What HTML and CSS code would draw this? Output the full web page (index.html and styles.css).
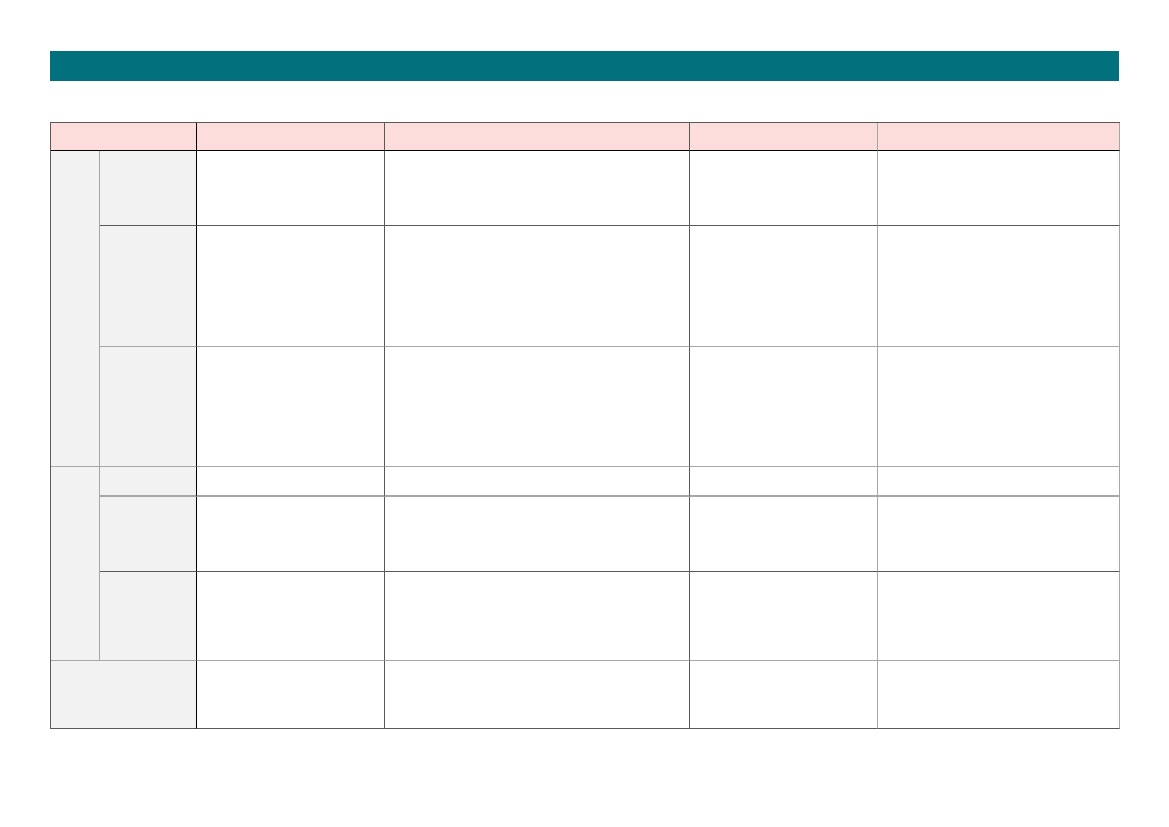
FILE: index.html
```html
<!DOCTYPE html>
<html>
<head>
<title>Sheet</title>
<link rel="stylesheet" href="styles.css">
</head>
<body>
<div class="banner"></div>

<table class="grid">
   <colgroup>
      <col class="c-group">
      <col class="c-label">
      <col class="c-a">
      <col class="c-b">
      <col class="c-c">
      <col class="c-d">
   </colgroup>
   <tr class="head">
      <th colspan="2" class="key"></th>
      <th class="dark"></th>
      <th class="dark"></th>
      <th class="soft"></th>
      <th class="soft"></th>
   </tr>
   <tr class="r1">
      <td rowspan="3" class="group"></td>
      <td class="label"></td>
      <td class="dark"></td>
      <td class="dark"></td>
      <td class="soft"></td>
      <td class="soft"></td>
   </tr>
   <tr class="r2 light">
      <td class="label"></td>
      <td class="dark"></td>
      <td class="dark"></td>
      <td class="soft"></td>
      <td class="soft"></td>
   </tr>
   <tr class="r3 light">
      <td class="label"></td>
      <td class="dark"></td>
      <td class="dark"></td>
      <td class="soft"></td>
      <td class="soft"></td>
   </tr>
   <tr class="r4 light">
      <td rowspan="3" class="group light-bottom"></td>
      <td class="label"></td>
      <td class="dark"></td>
      <td class="dark"></td>
      <td class="soft"></td>
      <td class="soft"></td>
   </tr>
   <tr class="r5">
      <td class="label"></td>
      <td class="dark"></td>
      <td class="dark"></td>
      <td class="soft"></td>
      <td class="soft"></td>
   </tr>
   <tr class="r6 light">
      <td class="label"></td>
      <td class="dark"></td>
      <td class="dark"></td>
      <td class="soft"></td>
      <td class="soft"></td>
   </tr>
   <tr class="r7">
      <td colspan="2" class="label key"></td>
      <td class="dark"></td>
      <td class="dark"></td>
      <td class="soft"></td>
      <td class="soft"></td>
   </tr>
</table>
</body>
</html>
```

FILE: styles.css
```css
body
{
    margin: 8px;
    font-family: "Liberation Sans", Arial, sans-serif;
    background: #fff;
}

.banner
{
    margin: 43px 42px 0 42px;
    height: 30px;
    background: #02717d;
}

.grid
{
    margin: 41px 0 0 42px;
    width: 1070px;
    table-layout: fixed;
    border-collapse: separate;
    border-spacing: 0;
    border-top: 1px solid #595959;
    border-left: 1px solid #595959;
}

.c-group { width: 49px; }
.c-label { width: 97px; }
.c-a { width: 188px; }
.c-b { width: 305px; }
.c-c { width: 188px; }
.c-d { width: 242px; }

.grid th,
.grid td
{
    padding: 0;
    border-right: 1px solid #595959;
    border-bottom: 1px solid #595959;
}

.grid th
{
    background: #fddcdc;
    border-bottom-color: #000;
}

.grid .group
{
    background: #f2f2f2;
    border-right-color: #a6a6a6;
    border-bottom-color: #a6a6a6;
}

.grid .label
{
    background: #f2f2f2;
    border-right-color: #000;
}

.grid .key
{
    border-right-color: #000;
}

.grid .soft
{
    border-right-color: #a6a6a6;
}

.grid .light td
{
    border-bottom-color: #a6a6a6;
}

.grid .r4 td
{
    border-bottom-width: 2px;
}

.grid .r4 .group
{
    border-bottom-width: 1px;
}

.head { height: 28px; }
.r1 { height: 75px; }
.r2 { height: 121px; }
.r3 { height: 120px; }
.r4 { height: 30px; }
.r5 { height: 75px; }
.r6 { height: 89px; }
.r7 { height: 68px; }
```
